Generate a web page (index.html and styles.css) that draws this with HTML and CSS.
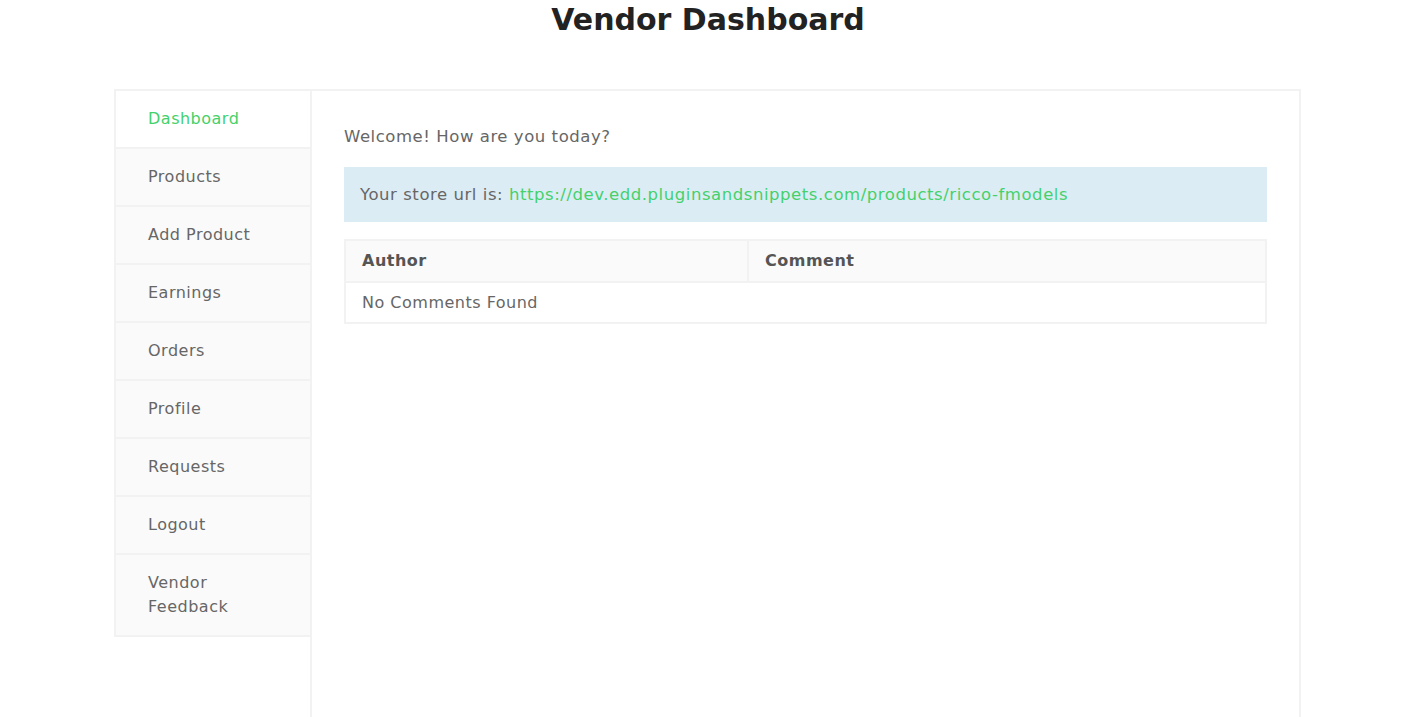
FILE: index.html
```html
<!DOCTYPE html>
<html lang="en">
<head>
<meta charset="utf-8">
<title>Vendor Dashboard</title>
<link rel="stylesheet" href="styles.css">
</head>
<body>
<h1 class="page-title">Vendor Dashboard</h1>
<div class="vendor-wrap">
  <ul class="vendor-nav">
    <li class="nav-item active"><a href="#">Dashboard</a></li>
    <li class="nav-item"><a href="#">Products</a></li>
    <li class="nav-item"><a href="#">Add Product</a></li>
    <li class="nav-item"><a href="#">Earnings</a></li>
    <li class="nav-item"><a href="#">Orders</a></li>
    <li class="nav-item"><a href="#">Profile</a></li>
    <li class="nav-item"><a href="#">Requests</a></li>
    <li class="nav-item"><a href="#">Logout</a></li>
    <li class="nav-item"><a href="#" class="narrow">Vendor Feedback</a></li>
  </ul>
  <div class="vendor-content">
    <p class="welcome">Welcome! How are you today?</p>
    <div class="store-url">Your store url is: <a href="#">https://dev.edd.pluginsandsnippets.com/products/ricco-fmodels</a></div>
    <table class="comments">
      <thead>
        <tr><th class="col-author">Author</th><th>Comment</th></tr>
      </thead>
      <tbody>
        <tr><td colspan="2">No Comments Found</td></tr>
      </tbody>
    </table>
  </div>
</div>
</body>
</html>
```
FILE: styles.css
```css
* { box-sizing: border-box; }
html, body { margin: 0; padding: 0; background: #fff; }
body {
  font-family: "DejaVu Sans", "Noto Sans", sans-serif;
  color: #666;
  font-size: 16px;
  letter-spacing: 0.5px;
  height: 717px;
  overflow: hidden;
}
.page-title {
  margin: 0;
  height: 89px;
  text-align: center;
  font-size: 30px;
  line-height: 40px;
  font-weight: 700;
  letter-spacing: 0;
  color: #222;
}
.vendor-wrap {
  display: flex;
  width: 1187px;
  margin-left: 114px;
  align-items: flex-start;
}
.vendor-nav {
  list-style: none;
  margin: 0;
  padding: 0;
  width: 198px;
  flex: none;
  border: 2px solid #f2f2f2;
  position: relative;
  z-index: 1;
}
.nav-item {
  background: #fafafa;
  border-bottom: 2px solid #f2f2f2;
}
.nav-item:last-child { border-bottom: none; }
.nav-item.active { background: #fff; }
.nav-item a {
  display: block;
  padding: 16px 32px;
  line-height: 24px;
  color: #666;
  text-decoration: none;
}
.nav-item a.narrow { padding-right: 70px; }
.nav-item.active a { color: #44d16b; }
.vendor-content {
  flex: 1;
  margin-left: -2px;
  border: 2px solid #f2f2f2;
  height: 640px;
  padding: 32px 32px;
}
.welcome {
  margin: 0 0 16px;
  line-height: 28px;
  font-size: 16.5px;
  letter-spacing: 0.55px;
}
.store-url {
  background: #dcecf5;
  padding: 15px 16px;
  line-height: 25px;
  font-size: 16.5px;
  letter-spacing: 0.55px;
  margin-bottom: 17px;
}
.store-url a { color: #44d16b; text-decoration: none; }
.comments {
  width: 100%;
  border-collapse: collapse;
  border: 2px solid #f2f2f2;
}
.comments th, .comments td {
  border: 2px solid #f2f2f2;
  text-align: left;
  padding: 8px 16px;
  line-height: 22px;
}
.comments th {
  background: #fafafa;
  font-weight: 700;
  color: #555;
  height: 42px;
}
.comments td { height: 41px; }
.col-author { width: 403px; }
```
